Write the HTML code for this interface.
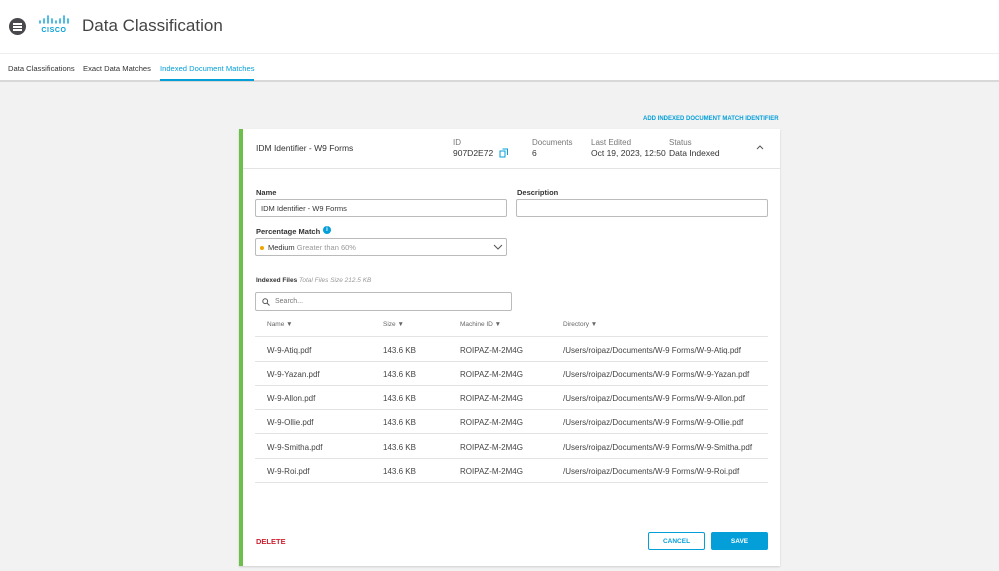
<!DOCTYPE html>
<html><head><style>
*{box-sizing:border-box;margin:0;padding:0}
body{width:999px;height:571px;overflow:hidden;background:#f2f2f2;font-family:"Liberation Sans",Arial,sans-serif;color:#333;position:relative}
.abs{position:absolute}
.top{position:absolute;left:0;top:0;width:999px;height:82px;background:#fff;border-bottom:2px solid #d8d8d8}
.t{position:absolute;white-space:nowrap}
.lbl{font-size:8px;color:#777}
.val{font-size:8.5px;color:#333}
.inp{position:absolute;border:1px solid #bbb;border-radius:2px;background:#fff;height:18px}
.row{position:absolute;left:255px;width:513px;height:24px;border-bottom:1px solid #e3e3e3;font-size:8px;color:#444}
.row span{position:absolute;top:8px;white-space:nowrap}
.btn{position:absolute;top:532px;width:57px;height:18px;border-radius:2px;font-size:6.5px;font-weight:bold;display:flex;align-items:center;justify-content:center}
</style></head><body>
<div class="top">
  <div class="abs" style="left:9px;top:18px;width:17px;height:17px;border-radius:50%;background:#49494d"></div>
  <div class="abs" style="left:13px;top:23px;width:9px;height:1.5px;background:#fff;box-shadow:0 3px 0 #fff,0 6px 0 #fff"></div>
  <svg class="abs" style="left:38px;top:15px" width="32" height="18" viewBox="0 0 32 18">
    <g stroke="#049fd9" stroke-width="1.4" stroke-linecap="round">
      <line x1="2" y1="6" x2="2" y2="8"/><line x1="6" y1="4" x2="6" y2="8"/><line x1="10" y1="1" x2="10" y2="8"/><line x1="14" y1="4" x2="14" y2="8"/><line x1="18" y1="6" x2="18" y2="8"/><line x1="22" y1="4" x2="22" y2="8"/><line x1="26" y1="1" x2="26" y2="8"/><line x1="30" y1="4" x2="30" y2="8"/>
    </g>
    <text x="16" y="17" font-size="7" font-weight="bold" fill="#049fd9" text-anchor="middle" font-family="Liberation Sans" letter-spacing="0.6">CISCO</text>
  </svg>
  <div class="t" style="left:82px;top:16px;font-size:17px;color:#444">Data Classification</div>
  <div class="abs" style="left:0;top:53px;width:999px;height:1px;background:#eee"></div>
  <div class="t" style="left:8px;top:64px;font-size:7.6px;color:#333">Data Classifications</div>
  <div class="t" style="left:83px;top:64px;font-size:7.6px;color:#333">Exact Data Matches</div>
  <div class="t" style="left:160px;top:64px;font-size:7.6px;color:#049fd9">Indexed Document Matches</div>
  <div class="abs" style="left:160px;top:79px;width:94px;height:2px;background:#049fd9"></div>
</div>
<div class="t" style="left:643px;top:116px;font-size:6px;font-weight:bold;color:#049fd9">ADD INDEXED DOCUMENT MATCH IDENTIFIER</div>
<div class="abs" style="left:239px;top:129px;width:541px;height:437px;background:#fff;border-left:4px solid #6cc04a;box-shadow:0 1px 2px rgba(0,0,0,.15)"></div>
<div class="abs" style="left:243px;top:168px;width:537px;height:1px;background:#e3e3e3"></div>
<div class="t val" style="left:256px;top:143px">IDM Identifier - W9 Forms</div>
<div class="t lbl" style="left:453px;top:138px">ID</div>
<div class="t val" style="left:453px;top:148px">907D2E72</div>
<svg class="abs" style="left:499px;top:148px" width="10" height="10" viewBox="0 0 10 10"><rect x="1" y="3" width="5" height="6" fill="none" stroke="#049fd9"/><path d="M3.5 1h5v6" fill="none" stroke="#049fd9"/></svg>
<div class="t lbl" style="left:532px;top:138px">Documents</div>
<div class="t val" style="left:532px;top:148px">6</div>
<div class="t lbl" style="left:591px;top:138px">Last Edited</div>
<div class="t val" style="left:591px;top:148px">Oct 19, 2023, 12:50</div>
<div class="t lbl" style="left:669px;top:138px">Status</div>
<div class="t val" style="left:669px;top:148px">Data Indexed</div>
<svg class="abs" style="left:756px;top:144px" width="8" height="6"><path d="M1 5L4 2L7 5" fill="none" stroke="#555"/></svg>

<div class="t" style="left:256px;top:188px;font-size:7.5px;font-weight:bold">Name</div>
<div class="inp" style="left:255px;top:199px;width:252px"><span class="t" style="left:5px;top:4px;font-size:7.5px">IDM Identifier - W9 Forms</span></div>
<div class="t" style="left:517px;top:188px;font-size:7.5px;font-weight:bold">Description</div>
<div class="inp" style="left:516px;top:199px;width:252px"></div>
<div class="t" style="left:256px;top:227px;font-size:7.5px;font-weight:bold">Percentage Match</div>
<div class="abs" style="left:323px;top:226px;width:8px;height:8px;border-radius:50%;background:#049fd9;color:#fff;font-size:6px;text-align:center;line-height:8px;font-weight:bold">i</div>
<div class="inp" style="left:255px;top:238px;width:252px"><div class="abs" style="left:4px;top:7px;width:4px;height:4px;border-radius:50%;background:#f0a500"></div><span class="t" style="left:12px;top:4px;font-size:7.5px">Medium <span style="color:#999">Greater than 60%</span></span>
<svg class="abs" style="left:237px;top:5px" width="10" height="7"><path d="M1 1L5 5L9 1" fill="none" stroke="#555"/></svg></div>

<div class="t" style="left:256px;top:277px;font-size:6.5px;font-weight:bold">Indexed Files <span style="font-weight:normal;font-style:italic;color:#999">Total Files Size 212.5 KB</span></div>
<div class="inp" style="left:255px;top:292px;width:257px;height:19px"><svg class="abs" style="left:6px;top:5px" width="8" height="8"><circle cx="3.2" cy="3.2" r="2.4" fill="none" stroke="#555"/><line x1="5" y1="5" x2="7.5" y2="7.5" stroke="#555"/></svg><span class="t" style="left:19px;top:5px;font-size:7px;color:#777">Search...</span></div>

<div class="row" style="top:313px;height:24px"><span style="left:12px;top:8px;font-size:6.5px;color:#666">Name ▼</span><span style="left:128px;top:8px;font-size:6.5px;color:#666">Size ▼</span><span style="left:205px;top:8px;font-size:6.5px;color:#666">Machine ID ▼</span><span style="left:308px;top:8px;font-size:6.5px;color:#666">Directory ▼</span></div>
<div class="row" style="top:338px"><span style="left:12px">W-9-Atiq.pdf</span><span style="left:128px">143.6 KB</span><span style="left:205px">ROIPAZ-M-2M4G</span><span style="left:308px">/Users/roipaz/Documents/W-9 Forms/W-9-Atiq.pdf</span></div>
<div class="row" style="top:362px"><span style="left:12px">W-9-Yazan.pdf</span><span style="left:128px">143.6 KB</span><span style="left:205px">ROIPAZ-M-2M4G</span><span style="left:308px">/Users/roipaz/Documents/W-9 Forms/W-9-Yazan.pdf</span></div>
<div class="row" style="top:386px"><span style="left:12px">W-9-Allon.pdf</span><span style="left:128px">143.6 KB</span><span style="left:205px">ROIPAZ-M-2M4G</span><span style="left:308px">/Users/roipaz/Documents/W-9 Forms/W-9-Allon.pdf</span></div>
<div class="row" style="top:410px"><span style="left:12px">W-9-Ollie.pdf</span><span style="left:128px">143.6 KB</span><span style="left:205px">ROIPAZ-M-2M4G</span><span style="left:308px">/Users/roipaz/Documents/W-9 Forms/W-9-Ollie.pdf</span></div>
<div class="row" style="top:435px"><span style="left:12px">W-9-Smitha.pdf</span><span style="left:128px">143.6 KB</span><span style="left:205px">ROIPAZ-M-2M4G</span><span style="left:308px">/Users/roipaz/Documents/W-9 Forms/W-9-Smitha.pdf</span></div>
<div class="row" style="top:459px"><span style="left:12px">W-9-Roi.pdf</span><span style="left:128px">143.6 KB</span><span style="left:205px">ROIPAZ-M-2M4G</span><span style="left:308px">/Users/roipaz/Documents/W-9 Forms/W-9-Roi.pdf</span></div>

<div class="t" style="left:256px;top:537px;font-size:7.5px;font-weight:bold;color:#cf2030">DELETE</div>
<div class="btn" style="left:648px;border:1px solid #049fd9;color:#049fd9">CANCEL</div>
<div class="btn" style="left:711px;background:#049fd9;color:#fff">SAVE</div>
</body></html>
